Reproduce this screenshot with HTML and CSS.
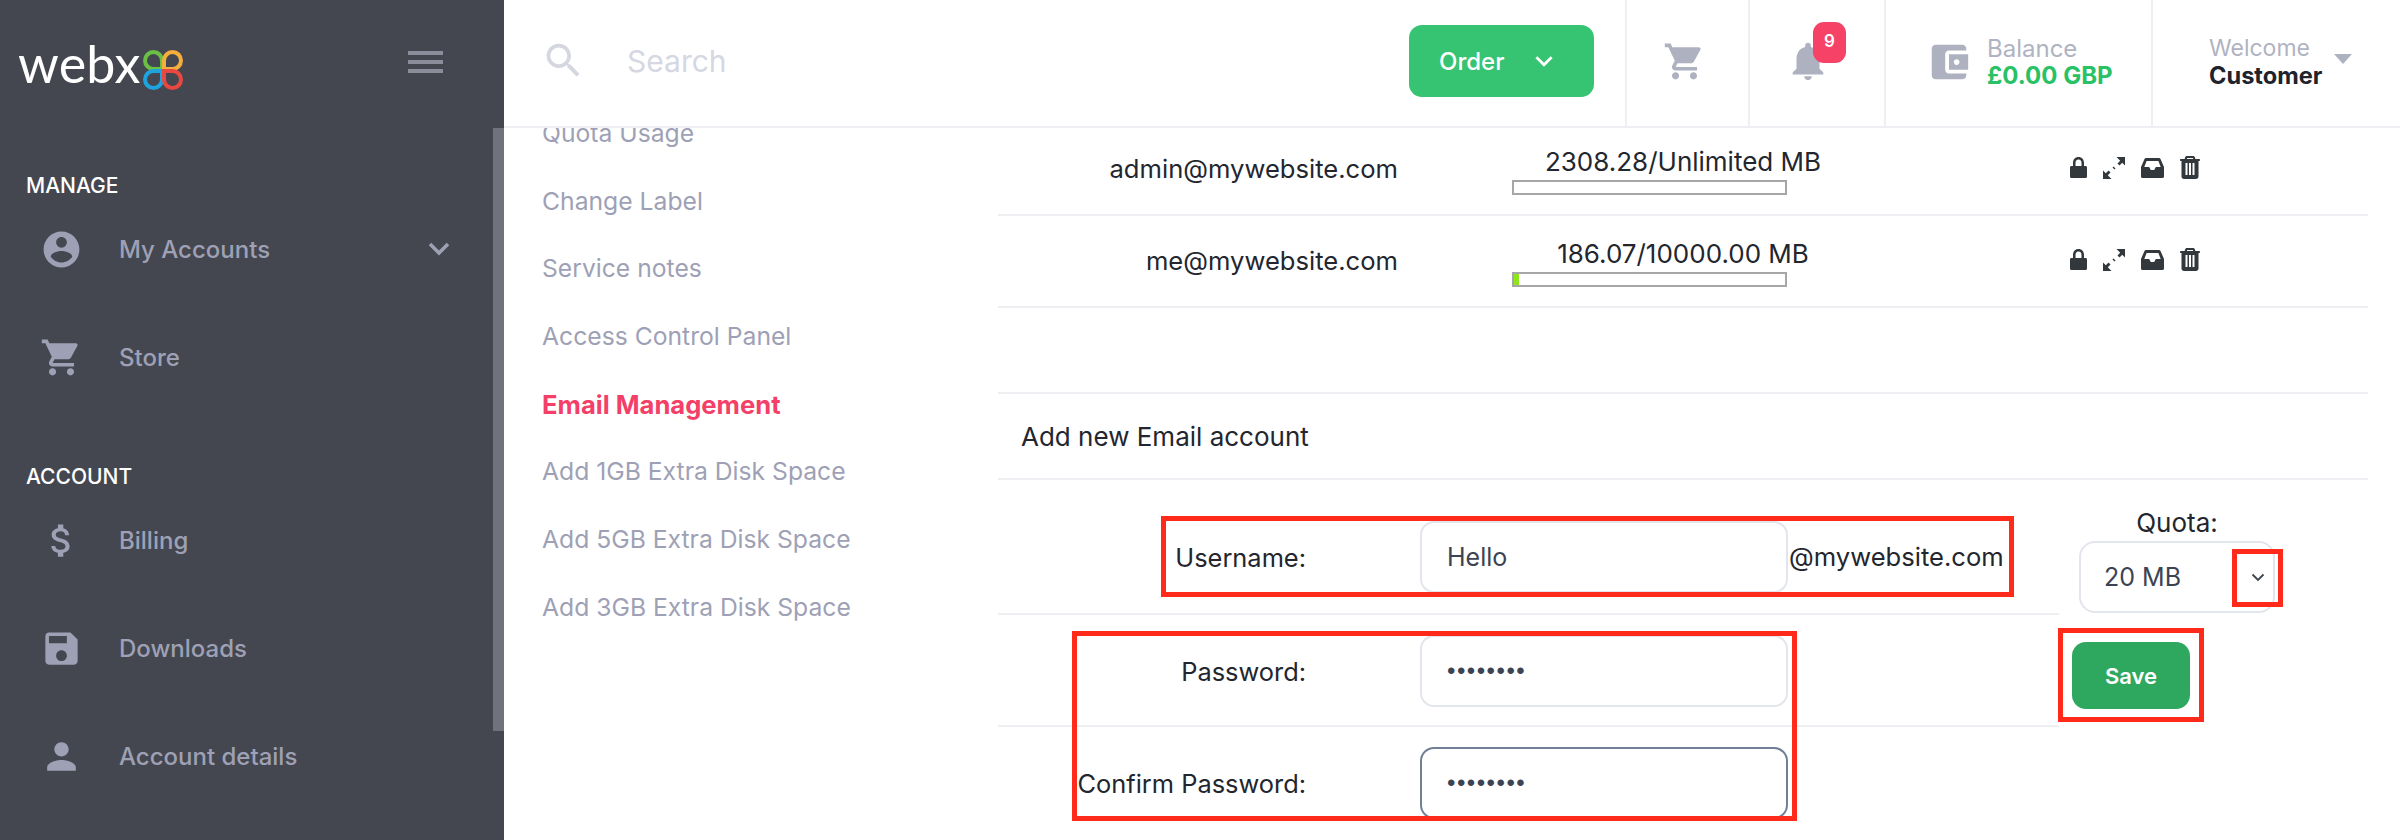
FILE: index.html
```html
<!DOCTYPE html>
<html lang="en">
<head>
    <meta charset="UTF-8">
    <title>Email Management</title>
    <link rel="stylesheet" href="styles.css">
</head>
<body>
    <div class="app">
        <aside class="sidebar">
            <div class="brand">
                <div class="logo">
                    <span class="logo-word">webx</span>
                    <svg class="logo-mark" viewBox="0 0 40 40" fill="none" stroke-width="4">
                        <path stroke="#6abf45" d="M19 19H10.500A8.500 8.500 0 1 1 19 10.500Z"/>
                        <path stroke="#f5ae3d" d="M21 19H29.500A8.500 8.500 0 1 0 21 10.500Z"/>
                        <path stroke="#1fa3dc" d="M19 21H10.500A8.500 8.500 0 1 0 19 29.500Z"/>
                        <path stroke="#e8483f" d="M21 21H29.500A8.500 8.500 0 1 1 21 29.500Z"/>
                    </svg>
                </div>
                <div class="burger"><span></span><span></span><span></span></div>
            </div>

            <div class="nav-title">MANAGE</div>
            <div class="nav-item">
                <svg class="nav-icon" viewBox="0 0 24 24"><path d="M12 2C6.480 2 2 6.480 2 12s4.480 10 10 10 10-4.480 10-10S17.520 2 12 2zm0 3c1.660 0 3 1.340 3 3s-1.340 3-3 3-3-1.340-3-3 1.340-3 3-3zm0 14.200c-2.500 0-4.710-1.280-6-3.220.030-1.990 4-3.080 6-3.080 1.990 0 5.970 1.090 6 3.080-1.290 1.940-3.500 3.220-6 3.220z"/></svg>
                <span>My Accounts</span>
                <svg class="nav-chevron" viewBox="0 0 22 14" fill="none"><path d="M2 2l9 9 9-9"/></svg>
            </div>
            <div class="nav-item">
                <svg class="nav-icon" viewBox="0 0 24 24"><path d="M7 18c-1.100 0-1.990.9-1.990 2S5.900 22 7 22s2-.9 2-2-.9-2-2-2zM1 2v2h2l3.600 7.590-1.350 2.450c-.16.280-.25.610-.25.960 0 1.100.9 2 2 2h12v-2H7.420c-.14 0-.25-.11-.25-.25l.030-.12.9-1.630h7.450c.750 0 1.410-.41 1.750-1.030l3.580-6.490c.080-.14.120-.31.120-.48 0-.55-.45-1-1-1H5.210l-.94-2H1zm16 16c-1.100 0-1.990.9-1.990 2s.89 2 1.990 2 2-.9 2-2-.9-2-2-2z"/></svg>
                <span>Store</span>
            </div>

            <div class="nav-title nav-title-second">ACCOUNT</div>
            <div class="nav-item">
                <svg class="nav-icon" viewBox="0 0 24 24"><path d="M11.800 10.900c-2.270-.59-3-1.200-3-2.150 0-1.090 1.010-1.850 2.700-1.850 1.780 0 2.440.85 2.500 2.100h2.210c-.07-1.720-1.120-3.300-3.210-3.810V3h-3v2.160c-1.940.42-3.500 1.680-3.500 3.610 0 2.310 1.910 3.460 4.700 4.130 2.500.6 3 1.480 3 2.410 0 .69-.49 1.790-2.700 1.790-2.060 0-2.870-.92-2.980-2.100h-2.200c.12 2.190 1.760 3.420 3.680 3.830V21h3v-2.150c1.950-.37 3.500-1.500 3.500-3.550 0-2.840-2.430-3.810-4.700-4.400z"/></svg>
                <span>Billing</span>
            </div>
            <div class="nav-item">
                <svg class="nav-icon" viewBox="0 0 24 24"><path d="M17 3H5c-1.110 0-2 .9-2 2v14c0 1.100.89 2 2 2h14c1.100 0 2-.9 2-2V7l-4-4zm-5 16c-1.660 0-3-1.340-3-3s1.340-3 3-3 3 1.340 3 3-1.340 3-3 3zm3-10H5V5h10v4z"/></svg>
                <span>Downloads</span>
            </div>
            <div class="nav-item">
                <svg class="nav-icon" viewBox="0 0 24 24"><path d="M12 12c2.210 0 4-1.790 4-4s-1.790-4-4-4-4 1.790-4 4 1.790 4 4 4zm0 2c-2.670 0-8 1.340-8 4v2h16v-2c0-2.660-5.330-4-8-4z"/></svg>
                <span>Account details</span>
            </div>
            <div class="side-scroll"></div>
        </aside>

        <div class="main">
            <header class="topbar">
                <svg class="search-icon" viewBox="0 0 24 24"><path d="M15.500 14h-.79l-.28-.27C15.410 12.590 16 11.110 16 9.500 16 5.910 13.090 3 9.500 3S3 5.910 3 9.500 5.910 16 9.500 16c1.610 0 3.090-.59 4.230-1.570l.27.280v.79l5 4.990L20.490 19l-4.990-5zm-6 0C7.010 14 5 11.990 5 9.500S7.010 5 9.500 5 14 7.010 14 9.500 11.990 14 9.500 14z"/></svg>
                <input class="search-input" type="text" placeholder="Search">
                <button class="order-btn" type="button">
                    <span>Order</span>
                    <svg viewBox="0 0 18 11" fill="none"><path d="M2 2l7 7 7-7"/></svg>
                </button>
                <div class="top-cell cart-cell">
                    <svg viewBox="0 0 24 24"><path d="M7 18c-1.100 0-1.990.9-1.990 2S5.900 22 7 22s2-.9 2-2-.9-2-2-2zM1 2v2h2l3.600 7.590-1.350 2.450c-.16.280-.25.610-.25.960 0 1.100.9 2 2 2h12v-2H7.420c-.14 0-.25-.11-.25-.25l.030-.12.9-1.630h7.450c.750 0 1.410-.41 1.750-1.030l3.580-6.490c.080-.14.120-.31.120-.48 0-.55-.45-1-1-1H5.210l-.94-2H1zm16 16c-1.100 0-1.990.9-1.990 2s.89 2 1.990 2 2-.9 2-2-.9-2-2-2z"/></svg>
                </div>
                <div class="top-cell bell-cell">
                    <svg viewBox="0 0 24 24"><path d="M12 22c1.100 0 2-.9 2-2h-4c0 1.100.89 2 2 2zm6-6v-5c0-3.070-1.640-5.640-4.500-6.320V4c0-.83-.67-1.500-1.500-1.500s-1.500.67-1.500 1.500v.68C7.630 5.360 6 7.920 6 11v5l-2 2v1h16v-1l-2-2z"/></svg>
                    <span class="badge">9</span>
                </div>
                <div class="top-cell balance-cell">
                    <svg viewBox="0 0 24 24"><path d="M21 18v1c0 1.100-.9 2-2 2H5c-1.110 0-2-.9-2-2V5c0-1.100.89-2 2-2h14c1.100 0 2 .9 2 2v1h-9c-1.110 0-2 .9-2 2v8c0 1.100.89 2 2 2h9zm-9-2h10V8H12v8zm4-2.500c-.83 0-1.500-.67-1.500-1.500s.67-1.500 1.500-1.500 1.500.67 1.500 1.500-.67 1.500-1.500 1.500z"/></svg>
                    <div class="top-text">
                        <div class="top-small top-balance">Balance</div>
                        <div class="top-amount">£0.00 GBP</div>
                    </div>
                </div>
                <div class="top-cell user-cell">
                    <div class="top-text">
                        <div class="top-small">Welcome</div>
                        <div class="top-name">Customer</div>
                    </div>
                    <span class="user-caret"></span>
                </div>
            </header>

            <div class="content">
                <nav class="submenu">
                    <a>Quota Usage</a>
                    <a>Change Label</a>
                    <a>Service notes</a>
                    <a>Access Control Panel</a>
                    <a class="active">Email Management</a>
                    <a>Add 1GB Extra Disk Space</a>
                    <a>Add 5GB Extra Disk Space</a>
                    <a>Add 3GB Extra Disk Space</a>
                </nav>

                <section class="panel">
                    <div class="mail-row">
                        <div class="mail-name">admin@mywebsite.com</div>
                        <div class="mail-usage">
                            <div class="usage-text">2308.28/Unlimited MB</div>
                            <div class="usage-bar"></div>
                        </div>
                        <div class="mail-actions">
                            <svg class="ico-lock" viewBox="0 0 17 21"><path d="M8.500 0C4.900 0 3 2.600 3 6v3H1.500C.6 9 0 9.600 0 10.500v9C0 20.400.6 21 1.500 21h14c.9 0 1.500-.6 1.500-1.500v-9c0-.9-.6-1.500-1.500-1.500H14V6c0-3.400-1.900-6-5.500-6zM5.500 9V6c0-2.200 1-3.500 3-3.500s3 1.300 3 3.500v3z"/></svg>
                            <svg class="ico-expand" viewBox="0 0 22 22"><path d="M22 0v8.500l-2.800-2.800-2.700 2.700-2-2 2.700-2.700L13.500 0zM0 22v-8.500l2.800 2.800 2.700-2.700 2 2-2.700 2.700L8.500 22zM9.500 10.500l1-1 2 2-1 1z"/></svg>
                            <svg class="ico-inbox" viewBox="0 0 23 20"><path fill-rule="evenodd" d="M5 0h13c.7 0 1.200.3 1.500.9L23 9v9.500c0 .9-.6 1.500-1.500 1.500h-20C.6 20 0 19.400 0 18.500V9L3.500.9C3.800.3 4.300 0 5 0zm.6 3L3.300 9h4.900l1.600 3h3.400l1.600-3h4.900l-2.300-6z"/></svg>
                            <svg class="ico-trash" viewBox="0 0 20 23"><path fill-rule="evenodd" d="M7 0h6c1 0 1.700.6 2 1.500l.3 1.500H19c.6 0 1 .4 1 1s-.4 1-1 1h-.5v15.500c0 1.400-1.100 2.500-2.500 2.500H4c-1.400 0-2.500-1.100-2.500-2.500V5H1c-.6 0-1-.4-1-1s.4-1 1-1h3.700L5 1.500C5.300.6 6 0 7 0zm-.1 3h6.200l-.2-1H7.100zM5.500 7v12h2V7zm3.500 0v12h2V7zm3.500 0v12h2V7z"/></svg>
                        </div>
                    </div>
                    <div class="mail-row">
                        <div class="mail-name">me@mywebsite.com</div>
                        <div class="mail-usage">
                            <div class="usage-text">186.07/10000.00 MB</div>
                            <div class="usage-bar"><div class="usage-fill" style="width: 1.860%"></div></div>
                        </div>
                        <div class="mail-actions">
                            <svg class="ico-lock" viewBox="0 0 17 21"><path d="M8.500 0C4.900 0 3 2.600 3 6v3H1.500C.6 9 0 9.600 0 10.500v9C0 20.400.6 21 1.500 21h14c.9 0 1.500-.6 1.500-1.500v-9c0-.9-.6-1.500-1.500-1.500H14V6c0-3.400-1.900-6-5.500-6zM5.500 9V6c0-2.200 1-3.500 3-3.500s3 1.300 3 3.500v3z"/></svg>
                            <svg class="ico-expand" viewBox="0 0 22 22"><path d="M22 0v8.500l-2.800-2.800-2.700 2.700-2-2 2.700-2.700L13.500 0zM0 22v-8.500l2.800 2.800 2.700-2.700 2 2-2.700 2.700L8.500 22zM9.500 10.500l1-1 2 2-1 1z"/></svg>
                            <svg class="ico-inbox" viewBox="0 0 23 20"><path fill-rule="evenodd" d="M5 0h13c.7 0 1.200.3 1.500.9L23 9v9.500c0 .9-.6 1.500-1.500 1.500h-20C.6 20 0 19.400 0 18.500V9L3.500.9C3.800.3 4.300 0 5 0zm.6 3L3.300 9h4.900l1.600 3h3.400l1.600-3h4.900l-2.300-6z"/></svg>
                            <svg class="ico-trash" viewBox="0 0 20 23"><path fill-rule="evenodd" d="M7 0h6c1 0 1.700.6 2 1.500l.3 1.500H19c.6 0 1 .4 1 1s-.4 1-1 1h-.5v15.500c0 1.400-1.100 2.500-2.500 2.500H4c-1.400 0-2.500-1.100-2.500-2.500V5H1c-.6 0-1-.4-1-1s.4-1 1-1h3.700L5 1.500C5.300.6 6 0 7 0zm-.1 3h6.200l-.2-1H7.100zM5.500 7v12h2V7zm3.500 0v12h2V7zm3.500 0v12h2V7z"/></svg>
                        </div>
                    </div>
                    <div class="spacer-row"></div>
                    <div class="add-title">Add new Email account</div>

                    <div class="add-form">
                        <div class="fields">
                            <div class="field-row field-first">
                                <label for="user">Username:</label>
                                <input id="user" type="text" value="Hello">
                                <span class="suffix">@mywebsite.com</span>
                            </div>
                            <div class="field-row">
                                <label for="pass">Password:</label>
                                <input id="pass" class="secret" type="password" value="password">
                            </div>
                            <div class="field-row field-last">
                                <label for="pass2">Confirm Password:</label>
                                <input id="pass2" class="secret focused" type="password" value="password">
                            </div>
                        </div>
                        <div class="quota">
                            <label for="quota">Quota:</label>
                            <div class="select-wrap">
                                <select id="quota"><option>20 MB</option></select>
                                <svg viewBox="0 0 14 9" fill="none"><path d="M1.500 1.500L7 7l5.500-5.500"/></svg>
                            </div>
                            <button class="save-btn" type="button">Save</button>
                        </div>

                        <!-- red annotation boxes drawn on top of the form -->
                        <div class="mark mark-user"></div>
                        <div class="mark mark-pass"></div>
                        <div class="mark mark-arrow"></div>
                        <div class="mark mark-save"></div>
                    </div>
                </section>
            </div>
        </div>
    </div>
</body>
</html>
```

FILE: styles.css
```css
body {
    margin: 0;
    font-family: Inter, "Liberation Sans", sans-serif;
    color: #23262e;
    background-color: #fff;
}
.app {
    display: flex;
    width: 2400px;
    height: 840px;
    overflow: hidden;
}

/* sidebar */
.sidebar {
    position: relative;
    flex: 0 0 504px;
    box-sizing: border-box;
    background-color: #454750;
    color: #9ea1b5;
}
.brand {
    display: flex;
    align-items: center;
    justify-content: space-between;
    height: 127px;
    padding: 0 61px 0 18px;
}
.logo {
    display: flex;
    align-items: center;
    gap: 2px;
}
.logo-word {
    font-family: Lato, sans-serif;
    font-size: 52px;
    line-height: 60px;
    color: #fff;
    letter-spacing: 0.2px;
    margin-top: -2px;
}
.logo-mark {
    width: 40px;
    height: 40px;
    margin-top: 12px;
}
.burger {
    display: flex;
    flex-direction: column;
    gap: 5px;
    margin-top: -3px;
}
.burger span {
    display: block;
    width: 35px;
    height: 4px;
    background-color: #8b8d9b;
}
.nav-title {
    margin: 39px 0 0 26px;
    height: 40px;
    font-size: 21px;
    line-height: 40px;
    font-weight: 500;
    color: #fff;
}
.nav-title-second {
    margin-top: 56px;
}
.nav-item {
    display: flex;
    align-items: center;
    height: 88px;
    margin-bottom: 20px;
    padding-left: 40px;
    font-size: 24px;
    font-weight: 500;
}
.nav-title + .nav-item {
    margin-top: -1px;
}
.nav-item span {
    margin-left: 36px;
}
.nav-icon {
    flex: none;
    width: 43px;
    height: 43px;
    fill: #9ea1b5;
}
.nav-chevron {
    width: 22px;
    height: 14px;
    margin-left: auto;
    margin-right: 54px;
    stroke: #9ea1b5;
    stroke-width: 3.500;
}
.side-scroll {
    position: absolute;
    top: 128px;
    right: 0;
    width: 11px;
    height: 603px;
    background-color: #70727c;
}

/* top bar */
.main {
    flex: 1;
    min-width: 0;
}
.topbar {
    display: flex;
    align-items: stretch;
    box-sizing: border-box;
    height: 128px;
    border-bottom: 2px solid #eeeef3;
}
.search-icon {
    align-self: center;
    width: 45px;
    height: 45px;
    margin-left: 37px;
    margin-top: -6px;
    fill: #d5d7e0;
}
.search-input {
    flex: 1;
    min-width: 0;
    margin-left: 41px;
    border: none;
    outline: none;
    padding: 0;
    font-family: inherit;
    font-size: 30px;
    margin-top: -4px;
}
.search-input::placeholder {
    color: #d5d7e2;
    opacity: 1;
}
.order-btn {
    display: flex;
    align-items: center;
    align-self: flex-start;
    box-sizing: border-box;
    width: 185px;
    height: 72px;
    margin: 25px 31px 0 0;
    padding: 0 0 0 30px;
    border: none;
    border-radius: 13px;
    background-color: #36c472;
    color: #fff;
    font-family: inherit;
    font-size: 24px;
    font-weight: 500;
}
.order-btn svg {
    width: 20px;
    height: 12px;
    margin-left: 30px;
    stroke: #fff;
    stroke-width: 2.500;
}
.top-cell {
    position: relative;
    display: flex;
    align-items: center;
    box-sizing: border-box;
    border-left: 2px solid #eeeef3;
}
.top-cell svg {
    fill: #aeb1c0;
}
.cart-cell {
    width: 123px;
    padding-left: 36px;
}
.cart-cell svg {
    width: 43px;
    height: 43px;
    margin-top: -3px;
}
.bell-cell {
    width: 136px;
    padding-left: 35px;
}
.bell-cell svg {
    width: 46px;
    height: 46px;
    margin-top: -4px;
}
.badge {
    position: absolute;
    left: 63px;
    top: 22px;
    width: 33px;
    height: 41px;
    border-radius: 11px;
    background-color: #f54266;
    color: #fff;
    font-size: 17px;
    font-weight: 600;
    line-height: 38px;
    text-align: center;
}
.balance-cell {
    width: 267px;
    padding-left: 40px;
}
.balance-cell svg {
    width: 46px;
    height: 46px;
    margin-right: 15px;
    margin-top: -3px;
}
.top-text {
    margin-top: -2px;
    line-height: 27px;
}
.top-small {
    font-size: 23px;
    color: #b0b3c2;
}
.top-balance {
    font-size: 24px;
}
.top-amount {
    font-size: 24px;
    font-weight: 700;
    color: #28c165;
}
.user-cell {
    width: 249px;
    padding-left: 56px;
}
.top-name {
    font-size: 23.600px;
    font-weight: 700;
    color: #20232b;
}
.user-caret {
    width: 0;
    height: 0;
    margin: -8px 0 0 12px;
    border-left: 9px solid transparent;
    border-right: 9px solid transparent;
    border-top: 10px solid #aeb1c0;
}

/* page body */
.content {
    display: flex;
    height: 712px;
    overflow: hidden;
}
.submenu {
    flex: 0 0 456px;
    margin-top: -28px;
    padding-left: 38px;
}
.submenu a {
    display: block;
    height: 67.700px;
    line-height: 67.700px;
    font-size: 24.700px;
    color: #9ea1b5;
}
.submenu .active {
    font-size: 25.600px;
    font-weight: 700;
    color: #f43f68;
}
.panel {
    width: 1370px;
    margin-top: -4px;
    font-size: 26px;
}
.mail-row {
    display: flex;
    align-items: center;
    box-sizing: border-box;
    height: 92px;
    border-bottom: 2px solid #eeeef3;
}
.mail-name {
    width: 400px;
    text-align: right;
    font-size: 25.600px;
    margin-top: -2px;
}
.mail-usage {
    width: 342px;
    margin-left: 114px;
}
.usage-text {
    height: 36px;
    line-height: 36px;
    text-align: center;
}
.usage-bar {
    box-sizing: border-box;
    width: 275px;
    height: 15px;
    border: 2px solid #a6a6a6;
}
.usage-fill {
    height: 100%;
    background-color: #8ee51c;
}
.mail-actions {
    display: flex;
    align-items: center;
    margin-left: 216px;
    margin-top: -3px;
}
.mail-actions svg {
    flex: none;
    fill: #33383d;
}
.ico-lock {
    width: 17px;
    height: 21px;
}
.ico-expand {
    width: 22px;
    height: 22px;
    margin-left: 16px;
}
.ico-inbox {
    width: 23px;
    height: 20px;
    margin-left: 16px;
}
.ico-trash {
    width: 20px;
    height: 23px;
    margin-left: 16px;
}
.spacer-row {
    box-sizing: border-box;
    height: 86px;
    border-bottom: 2px solid #eeeef3;
}
.add-title {
    box-sizing: border-box;
    height: 86px;
    padding-left: 23px;
    border-bottom: 2px solid #eeeef3;
    line-height: 86px;
}

/* add account form */
.add-form {
    position: relative;
    display: flex;
}
.fields {
    width: 1061px;
}
.field-row {
    display: flex;
    align-items: flex-start;
    box-sizing: border-box;
    height: 112px;
    padding-top: 20px;
    border-bottom: 2px solid #eeeef3;
}
.field-first {
    height: 135px;
    padding-top: 41px;
}
.field-last {
    border-bottom: none;
}
.field-row label {
    flex: none;
    width: 308px;
    text-align: right;
    font-size: 25.400px;
    line-height: 74px;
}
.field-row input {
    flex: none;
    box-sizing: border-box;
    width: 368px;
    height: 72px;
    margin-left: 114px;
    padding: 0 25px;
    border: 2px solid #e2e6ec;
    border-radius: 14px;
    outline: none;
    font-family: inherit;
    font-size: 25px;
    color: #3c4352;
}
.field-row input.secret {
    font-family: "Liberation Sans", sans-serif;
    font-size: 24px;
    letter-spacing: 1.500px;
}
.field-row input.focused {
    border-color: #718096;
}
.suffix {
    margin-left: 1px;
    font-size: 25.600px;
    line-height: 72px;
}
.quota {
    padding: 25px 0 0 20px;
}
.quota label {
    display: block;
    width: 196px;
    text-align: center;
    line-height: 36px;
}
.select-wrap {
    position: relative;
    width: 196px;
}
.select-wrap select {
    display: block;
    box-sizing: border-box;
    width: 100%;
    height: 72px;
    padding: 0 23px;
    border: 2px solid #e2e6ec;
    border-radius: 16px;
    outline: none;
    appearance: none;
    background-color: #fff;
    font-family: inherit;
    font-size: 25px;
    color: #3c4352;
}
.select-wrap svg {
    position: absolute;
    top: 32px;
    right: 10px;
    width: 14px;
    height: 9px;
    stroke: #3c4352;
    stroke-width: 1.800;
}
.save-btn {
    display: block;
    width: 118px;
    height: 67px;
    margin: 29px 0 0 -7px;
    border: none;
    border-radius: 14px;
    background-color: #2fa85f;
    color: #fff;
    font-family: inherit;
    font-size: 22px;
    font-weight: 600;
}

/* coordinates are relative to .add-form, which starts at 998,480 */
.mark {
    position: absolute;
    box-sizing: border-box;
    border: 5px solid #ff2a1a;
}
.mark-user {
    left: 163px;
    top: 36px;
    width: 853px;
    height: 81px;
}
.mark-pass {
    left: 74px;
    top: 151px;
    width: 725px;
    height: 190px;
}
.mark-arrow {
    left: 1234px;
    top: 69px;
    width: 51px;
    height: 58px;
}
.mark-save {
    left: 1060px;
    top: 148px;
    width: 146px;
    height: 94px;
}
```
